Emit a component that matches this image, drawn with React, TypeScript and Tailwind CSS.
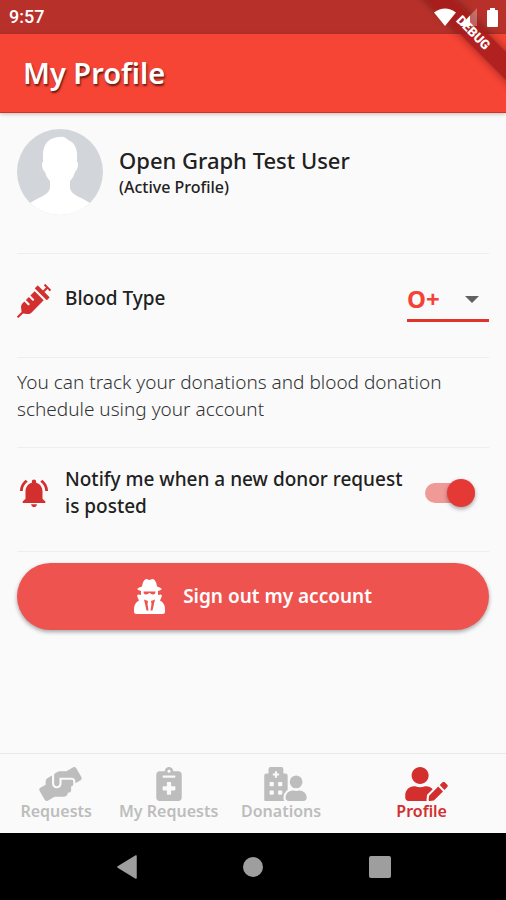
import { useState, type ReactNode } from "react";
import {
  FaHandsHelping,
  FaHospitalUser,
  FaNotesMedical,
  FaSyringe,
  FaUserEdit,
} from "react-icons/fa";
import { MdNotificationsActive } from "react-icons/md";

const BLOOD_TYPES = ["O+", "O-", "A+", "A-", "B+", "B-", "AB+", "AB-"];

function StatusBar() {
  return (
    <div className="flex h-[34px] items-center justify-between bg-[#b7312a] pr-2 pl-[9px] text-white">
      <span className="font-[Roboto,sans-serif] text-lg font-medium">9:57</span>
      <div className="relative z-10 flex items-center gap-1">
        <svg className="h-[18px] w-[22px]" viewBox="0 0 22 18" aria-hidden="true">
          <path d="M0 4.5Q11-3.5 22 4.5L11 18Z" fill="currentColor" />
        </svg>
        <svg className="mr-1.5 h-[18px] w-[17px]" viewBox="0 0 17 18" aria-hidden="true">
          <path d="M17 0V18H0Z" fill="currentColor" opacity="0.3" />
          <path d="M10 7.5V18H0Z" fill="currentColor" />
        </svg>
        <svg className="h-[19px] w-[11px]" viewBox="0 0 11 19" aria-hidden="true">
          <path d="M3 0H8V2H10Q11 2 11 3V18Q11 19 10 19H1Q0 19 0 18V3Q0 2 1 2H3Z" fill="currentColor" />
        </svg>
      </div>
    </div>
  );
}

function DebugBanner() {
  return (
    <div className="pointer-events-none absolute top-0 right-0 h-24 w-24 overflow-hidden">
      <div className="absolute top-[23px] -right-[36px] flex h-5 w-[138px] rotate-45 items-center justify-center bg-[#a51b1b]/85 font-[Roboto,sans-serif] text-[13px] font-black text-white shadow-[0_0_8px_rgba(0,0,0,0.4)]">
        DEBUG
      </div>
    </div>
  );
}

function Avatar() {
  return (
    <svg className="h-[86px] w-[86px] shrink-0 rounded-full" viewBox="0 0 86 86" role="img" aria-label="Profile photo">
      <rect width="86" height="86" fill="#d2d5da" />
      <path
        d="M43 8C47 7 49 9 51 11C57 13 60 19 60 26V33C62 33 61 41 58 43C57 47 55 50 53 52V59C54 66 64 68 73 74L78 86H8L13 74C22 68 32 66 33 59V52C31 50 29 47 28 43C25 41 24 33 26 33V26C26 14 33 8 43 8Z"
        fill="#fff"
      />
    </svg>
  );
}

function SpyIcon() {
  return (
    <svg className="h-[35px] w-[31px]" viewBox="0 0 31 35" aria-hidden="true">
      <path
        d="M3 10Q5 8 8 7.5C8.500 4 10 0 12.500 0C14 0 14 1 15.500 1C17 1 17 0 18.500 0C21 0 22.500 4 23 7.500Q26 8 28 10Q26.500 11.500 24 12V16L27 15.500Q28.500 16 27.500 18L26 21.500Q31 24 31 30V32.500Q31 35 28.500 35H2.500Q0 35 0 32.500V30Q0 24 5 21.500L3.500 18Q2.500 16 4 15.500L7 16V12Q4.500 11.500 3 10Z"
        fill="currentColor"
      />
      <path
        d="M9.500 12.500H21.500Q21.500 15.500 19 15.500Q17 15.500 15.500 13.800Q14 15.500 12 15.500Q9.500 15.500 9.500 12.500ZM10 20.500L14 22L13.500 25L14.500 31.500H12.500ZM21 20.500L17 22L17.500 25L16.500 31.500H18.500Z"
        fill="#ef5350"
      />
    </svg>
  );
}

interface NavItemProps {
  label: string;
  icon: ReactNode;
  active?: boolean;
}

function NavItem({ label, icon, active = false }: NavItemProps) {
  return (
    <a
      href="#"
      aria-current={active ? "page" : undefined}
      className={
        active
          ? "flex flex-[3] flex-col items-center text-[#d32f2f]"
          : "flex flex-[2] flex-col items-center text-[#bdbdbd]"
      }
    >
      <span className="flex h-[34px] w-[34px]">{icon}</span>
      <span className="text-base leading-5 font-semibold whitespace-nowrap">{label}</span>
    </a>
  );
}

export default function App() {
  const [bloodType, setBloodType] = useState("O+");
  const [notify, setNotify] = useState(true);

  return (
    <div className="relative flex min-h-screen flex-col bg-[#fafafa] font-['Noto_Sans',sans-serif] text-[#212121]">
      <StatusBar />
      <header className="flex h-[79px] items-center border-b border-[#d8301f] bg-[#f64435] px-[23px] shadow-[0_1px_4px_rgba(0,0,0,0.25)]">
        <h1 className="text-[29px] font-semibold text-white [text-shadow:1px_2px_2px_rgba(0,0,0,0.6)]">My Profile</h1>
      </header>
      <DebugBanner />

      <main className="flex-1 px-[17px] pt-4">
        <section className="flex h-[125px] items-start gap-4 border-b border-[#eeeeee]">
          <Avatar />
          <div className="pt-4">
            <h2 className="text-[22px] leading-[30px] font-medium">Open Graph Test User</h2>
            <p className="text-base leading-6 font-medium">(Active Profile)</p>
          </div>
        </section>

        <section className="flex h-[104px] items-start border-b border-[#eeeeee] pt-7">
          <FaSyringe className="mt-0.5 mr-[14px] h-[34px] w-[34px] shrink-0 text-[#d32f2f]" aria-hidden="true" />
          <label htmlFor="blood-type" className="flex-1 pt-0.5 text-[19px] leading-7 font-medium">
            Blood Type
          </label>
          <div className="relative w-[82px]">
            <select
              id="blood-type"
              value={bloodType}
              onChange={(event) => setBloodType(event.target.value)}
              className="block h-10 w-full appearance-none border-b-[3px] border-[#e0342a] bg-transparent pb-1 text-2xl font-bold text-[#f44336] outline-none"
            >
              {BLOOD_TYPES.map((type) => (
                <option key={type}>{type}</option>
              ))}
            </select>
            <svg className="pointer-events-none absolute top-[14px] right-2.5 h-[7px] w-[14px]" viewBox="0 0 14 7" aria-hidden="true">
              <path d="M0 0H14L7 7Z" fill="#616161" />
            </svg>
          </div>
        </section>

        <section className="h-[90px] border-b border-[#eeeeee] pt-[11px]">
          <p className="text-[19px] leading-[27px] font-light text-[#333333]">
            You can track your donations and blood donation schedule using your account
          </p>
        </section>

        <section className="flex h-[104px] items-start border-b border-[#eeeeee] pt-[18px]">
          <MdNotificationsActive className="mt-[10px] mr-[14px] h-[34px] w-[34px] shrink-0 text-[#d32f2f]" aria-hidden="true" />
          <label htmlFor="notify" className="flex-1 text-[19px] leading-[27px] font-medium">
            Notify me when a new donor request is posted
          </label>
          <input
            id="notify"
            type="checkbox"
            role="switch"
            checked={notify}
            onChange={(event) => setNotify(event.target.checked)}
            className="relative mt-[17px] mr-[14px] ml-3 h-5 w-[50px] shrink-0 appearance-none rounded-full bg-[#bdbdbd] before:absolute before:-top-1 before:left-0 before:h-7 before:w-7 before:rounded-full before:bg-white before:shadow-[0_2px_4px_rgba(0,0,0,0.35)] checked:bg-[#f09a98] checked:before:left-[22px] checked:before:bg-[#e53935]"
          />
        </section>

        <button
          type="button"
          className="mt-[11px] flex h-[67px] w-full items-center justify-center gap-[18px] rounded-full bg-[#ef5350] text-[19px] font-semibold text-white shadow-[0_2px_4px_rgba(0,0,0,0.35)]"
        >
          <SpyIcon />
          Sign out my account
        </button>
      </main>

      <nav className="flex h-20 border-t border-[#e8e8e8] pt-[13px]">
        <NavItem label="Requests" icon={<FaHandsHelping className="h-[34px] w-[43px] shrink-0" />} />
        <NavItem label="My Requests" icon={<FaNotesMedical className="h-[34px] w-[34px] shrink-0" />} />
        <NavItem label="Donations" icon={<FaHospitalUser className="h-[34px] w-[43px] shrink-0" />} />
        <NavItem label="Profile" active icon={<FaUserEdit className="h-[34px] w-[43px] shrink-0" />} />
      </nav>

      <div className="h-[67px] bg-black text-[#9e9e9e]">
        <div className="mx-auto grid h-full w-3/4 grid-cols-3 place-items-center">
          <button type="button" aria-label="Back">
            <svg className="h-6 w-5" viewBox="0 0 20 24" aria-hidden="true">
              <path d="M19 1V23L1 12Z" fill="currentColor" stroke="currentColor" strokeLinejoin="round" strokeWidth="1.5" />
            </svg>
          </button>
          <button type="button" aria-label="Home" className="h-5 w-5 rounded-full bg-current" />
          <button type="button" aria-label="Recent apps" className="h-[22px] w-[22px] rounded-xs bg-current" />
        </div>
      </div>
    </div>
  );
}
